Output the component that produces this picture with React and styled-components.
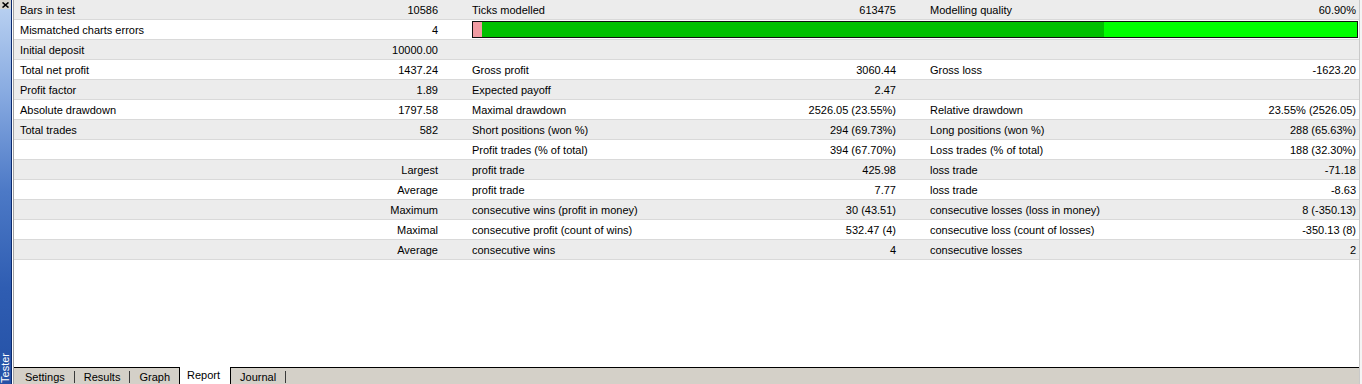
import React from "react";
import styled, { createGlobalStyle } from "styled-components";

const Global = createGlobalStyle`
  html, body { margin: 0; padding: 0; background: #ffffff; }
  body { font-family: "Liberation Sans", Arial, sans-serif; font-size: 11px; color: #000; }
  #root { height: 384px; }
`;

const Window = styled.div`
  display: flex;
  width: 1362px;
  height: 384px;
  overflow: hidden;
`;

const Sidebar = styled.div`
  width: 11px;
  flex: none;
  border-right: 1px solid #0b2a6e;
  background: linear-gradient(to bottom, #bcd3f2 0%, #86a9e0 25%, #4c79c6 50%, #2f5db2 75%, #2451a6 100%);
  display: flex;
  flex-direction: column;
  justify-content: space-between;
`;

const CloseBox = styled.div`
  height: 9px;
  background: #d8d5cd;
  display: flex;
  align-items: center;
  justify-content: center;
`;

const SideTitle = styled.div`
  writing-mode: vertical-rl;
  transform: rotate(180deg);
  color: #ffffff;
  font-size: 11px;
  line-height: 11px;
  padding-top: 1px;
`;

const Main = styled.div`
  flex: 1;
  display: flex;
  border-left: 1px solid #ffffff;
  padding-right: 2px;
  background: #f4f4f4;
`;

const Content = styled.div`
  flex: 1;
  display: flex;
  flex-direction: column;
  border-left: 1px solid #a3a3a3;
  border-right: 1px solid #c9c9c9;
  background: #ffffff;
  min-width: 0;
`;

const Table = styled.div`
  display: flex;
  flex-direction: column;
`;

const Row = styled.div`
  display: grid;
  grid-template-columns: 452px 458px 1fr;
  height: 19px;
  border-bottom: 1px solid #d9d9d9;
  background: ${(p) => (p.$alt ? "#ececec" : "#ffffff")};
`;

const Group = styled.div`
  display: grid;
  grid-template-columns: 1fr auto;
  align-items: center;
  padding: 1px ${(p) => (p.$last ? 3 : 28)}px 0 6px;
  line-height: 18px;
  white-space: nowrap;
`;

const Label = styled.span``;

const Value = styled.span`
  text-align: right;
`;

const BarCell = styled.div`
  grid-column: 2 / 4;
  padding: 1px 1px 1px 6px;
  display: flex;
`;

const Bar = styled.div`
  flex: 1;
  display: flex;
  border: 1px solid #111;
  height: 15px;
`;

const Seg = styled.div`
  flex: ${(p) => (p.$w ? `0 0 ${p.$w}px` : "1")};
  background: ${(p) => p.$c};
`;

const Filler = styled.div`
  flex: 1;
  background: #ffffff;
`;

const TabBar = styled.div`
  height: 16px;
  flex: none;
  border-top: 1px solid #000;
  background: #d4d0c8;
  display: flex;
  align-items: stretch;
  padding-left: 2px;
`;

const Tab = styled.div`
  padding: 1px 9px 0;
  line-height: 16px;
  height: 15px;
  color: #000;
`;

const ActiveTab = styled.div`
  margin-top: -1px;
  height: 17px;
  padding: 0 10px 0 7px;
  line-height: 16px;
  background: #ffffff;
  border-left: 1px solid #000;
  border-right: 1px solid #000;
  color: #000;
`;

const TabSep = styled.div`
  width: 1px;
  height: 12px;
  align-self: center;
  background: #3a3a3a;
  margin: 1px ${(p) => p.$mr || 0}px 0 0;
`;

const rows = [
  { a: ["Bars in test", "10586"], b: ["Ticks modelled", "613475"], c: ["Modelling quality", "60.90%"] },
  { a: ["Mismatched charts errors", "4"], bar: true },
  { a: ["Initial deposit", "10000.00"] },
  { a: ["Total net profit", "1437.24"], b: ["Gross profit", "3060.44"], c: ["Gross loss", "-1623.20"] },
  { a: ["Profit factor", "1.89"], b: ["Expected payoff", "2.47"] },
  { a: ["Absolute drawdown", "1797.58"], b: ["Maximal drawdown", "2526.05 (23.55%)"], c: ["Relative drawdown", "23.55% (2526.05)"] },
  { a: ["Total trades", "582"], b: ["Short positions (won %)", "294 (69.73%)"], c: ["Long positions (won %)", "288 (65.63%)"] },
  { a: ["", ""], b: ["Profit trades (% of total)", "394 (67.70%)"], c: ["Loss trades (% of total)", "188 (32.30%)"] },
  { a: ["", "Largest"], b: ["profit trade", "425.98"], c: ["loss trade", "-71.18"] },
  { a: ["", "Average"], b: ["profit trade", "7.77"], c: ["loss trade", "-8.63"] },
  { a: ["", "Maximum"], b: ["consecutive wins (profit in money)", "30 (43.51)"], c: ["consecutive losses (loss in money)", "8 (-350.13)"] },
  { a: ["", "Maximal"], b: ["consecutive profit (count of wins)", "532.47 (4)"], c: ["consecutive loss (count of losses)", "-350.13 (8)"] },
  { a: ["", "Average"], b: ["consecutive wins", "4"], c: ["consecutive losses", "2"] },
];

const Cell = ({ data, last }) => (
  <Group $last={last}>
    <Label>{data ? data[0] : ""}</Label>
    <Value>{data ? data[1] : ""}</Value>
  </Group>
);

const tabs = [
  { name: "Settings" },
  { name: "Results" },
  { name: "Graph" },
  { name: "Report", active: true },
  { name: "Journal" },
];

export default function App() {
  return (
    <>
      <Global />
      <Window>
        <Sidebar>
          <CloseBox>
            <svg width="7" height="6" viewBox="0 0 7 6">
              <path d="M0.5 0.5 L6.5 5.5 M6.5 0.5 L0.5 5.5" stroke="#000" strokeWidth="1.6" />
            </svg>
          </CloseBox>
          <SideTitle>Tester</SideTitle>
        </Sidebar>
        <Main>
          <Content>
            <Table>
              {rows.map((r, i) => (
                <Row key={i} $alt={i % 2 === 0}>
                  <Cell data={r.a} />
                  {r.bar ? (
                    <BarCell>
                      <Bar>
                        <Seg $w={9} $c="#f19ca3" />
                        <Seg $w={622} $c="#00c000" />
                        <Seg $c="#00ff00" />
                      </Bar>
                    </BarCell>
                  ) : (
                    <>
                      <Cell data={r.b} />
                      <Cell data={r.c} last />
                    </>
                  )}
                </Row>
              ))}
            </Table>
            <Filler />
            <TabBar>
              {tabs.map((t, i) => {
                const next = tabs[i + 1];
                if (t.active) return <ActiveTab key={t.name}>{t.name}</ActiveTab>;
                return (
                  <React.Fragment key={t.name}>
                    <Tab>{t.name}</Tab>
                    {!(next && next.active) && <TabSep />}
                  </React.Fragment>
                );
              })}
            </TabBar>
          </Content>
        </Main>
      </Window>
    </>
  );
}
